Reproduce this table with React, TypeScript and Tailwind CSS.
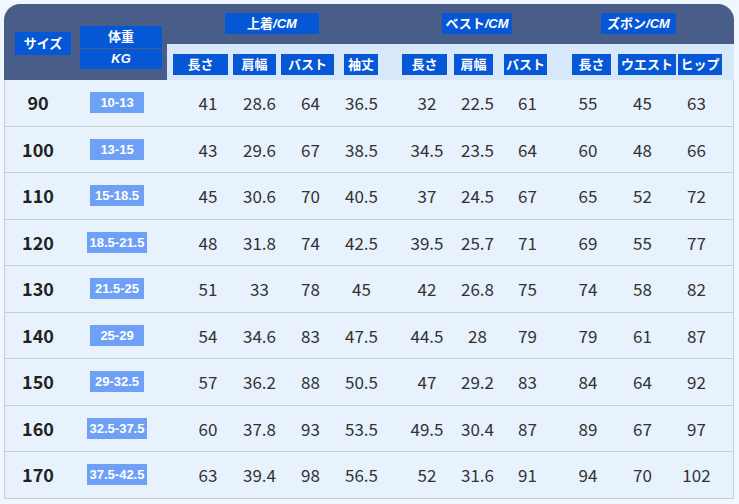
import React from 'react';

const ROWS = [
  { size: '90', kg: '10-13', v: ['41', '28.6', '64', '36.5', '32', '22.5', '61', '55', '45', '63'] },
  { size: '100', kg: '13-15', v: ['43', '29.6', '67', '38.5', '34.5', '23.5', '64', '60', '48', '66'] },
  { size: '110', kg: '15-18.5', v: ['45', '30.6', '70', '40.5', '37', '24.5', '67', '65', '52', '72'] },
  { size: '120', kg: '18.5-21.5', v: ['48', '31.8', '74', '42.5', '39.5', '25.7', '71', '69', '55', '77'] },
  { size: '130', kg: '21.5-25', v: ['51', '33', '78', '45', '42', '26.8', '75', '74', '58', '82'] },
  { size: '140', kg: '25-29', v: ['54', '34.6', '83', '47.5', '44.5', '28', '79', '79', '61', '87'] },
  { size: '150', kg: '29-32.5', v: ['57', '36.2', '88', '50.5', '47', '29.2', '83', '84', '64', '92'] },
  { size: '160', kg: '32.5-37.5', v: ['60', '37.8', '93', '53.5', '49.5', '30.4', '87', '89', '67', '97'] },
  { size: '170', kg: '37.5-42.5', v: ['63', '39.4', '98', '56.5', '52', '31.6', '91', '94', '70', '102'] },
];

// per data column: width + nudge so the text lands where the reference has it
const COLS = [
  'w-[71px] pl-[19px]',
  'w-[51px]',
  'w-[51px]',
  'w-[58px] pr-[7px]',
  'w-[58px] pl-[8px]',
  'w-[51px]',
  'w-[55px] pr-[6px]',
  'w-[57px] pl-[3px]',
  'w-[55px]',
  'w-[62px] pr-[9px]',
];

const SUB = [
  { label: '長さ', cls: 'ml-[6px] w-[55px]' },
  { label: '肩幅', cls: 'ml-[5px] w-[43px]' },
  { label: 'バスト', cls: 'ml-[5px] w-[53px]' },
  { label: '袖丈', cls: 'ml-[10px] w-[34px]' },
  { label: '長さ', cls: 'ml-[24px] w-[45px]' },
  { label: '肩幅', cls: 'ml-[7px] w-[39px]' },
  { label: 'バスト', cls: 'ml-[11px] w-[43px]' },
  { label: '長さ', cls: 'ml-[25px] w-[39px]' },
  { label: 'ウエスト', cls: 'ml-[7px] w-[58px]' },
  { label: 'ヒップ', cls: 'ml-[2px] w-[44px]' },
];

const labelFont = { fontFamily: '"Liberation Sans", "Noto Sans CJK JP", sans-serif' };

function Tag({ children, className }: { children: React.ReactNode; className: string }) {
  return (
    <div className={`bg-[#0657d6] text-white font-bold text-[13px] flex items-center justify-center ${className}`} style={labelFont}>
      {children}
    </div>
  );
}

export default function App() {
  return (
    <div className="w-[739px] h-[504px] bg-[#f1f7fe] pt-[4px] pl-[4px] overflow-hidden" style={{ fontFamily: '"Noto Sans CJK JP", "Noto Sans", sans-serif' }}>
      <div className="w-[730px]">
        {/* header */}
        <div className="h-[76px] bg-[#485e89] rounded-t-[16px] flex overflow-hidden">
          <div className="w-[163px] flex items-start pl-[11px]">
            <Tag className="mt-[28px] w-[56px] h-[23px]">サイズ</Tag>
            <div className="ml-[9px] mt-[22px] flex flex-col gap-[1px]">
              <Tag className="w-[82px] h-[22px]">体重</Tag>
              <Tag className="w-[82px] h-[20px] italic">KG</Tag>
            </div>
          </div>
          <div className="flex-1 flex flex-col">
            <div className="h-[40px] flex items-start pt-[9px]">
              <Tag className="ml-[58px] w-[94px] h-[21px]">上着<span className="italic">/CM</span></Tag>
              <Tag className="ml-[123px] w-[70px] h-[21px]">ベスト<span className="italic">/CM</span></Tag>
              <Tag className="ml-[89px] w-[75px] h-[21px]">ズボン<span className="italic">/CM</span></Tag>
            </div>
            <div className="h-[36px] bg-[#d6e8f9] flex items-start pt-[10px]">
              {SUB.map((s, i) => (
                <Tag key={i} className={`h-[21px] ${s.cls}`}>{s.label}</Tag>
              ))}
            </div>
          </div>
        </div>

        {/* body */}
        <div className="border-l border-r border-[#c5ced8]">
          {ROWS.map(r => (
            <div key={r.size} className="h-[46.5px] flex items-center bg-[#e8f2fc] border-b border-[#c5ced8] text-[17px] text-[#333]">
              <div className="w-[72px] pr-[6px] text-center font-bold text-[18px] text-[#222]">{r.size}</div>
              <div className="w-[86px] pr-[6px] flex justify-center">
                <span className="min-w-[54px] h-[21px] px-[3px] bg-[#6ea1f6] text-white font-bold text-[13px] flex items-center justify-center" style={labelFont}>
                  {r.kg}
                </span>
              </div>
              {r.v.map((v, i) => (
                <div key={i} className={`text-center ${COLS[i]}`}>{v}</div>
              ))}
            </div>
          ))}
        </div>
      </div>
    </div>
  );
}
